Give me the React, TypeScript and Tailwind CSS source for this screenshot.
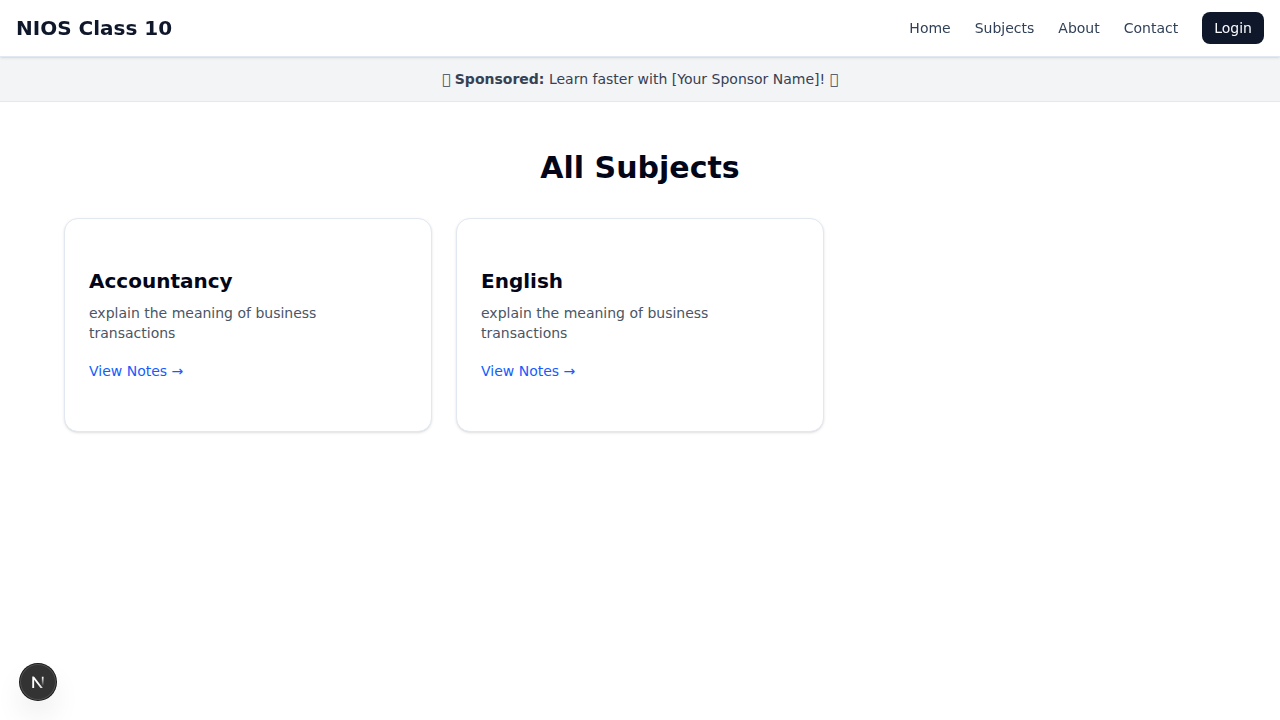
const subjects = [
  { name: "Accountancy", description: "explain the meaning of business transactions" },
  { name: "English", description: "explain the meaning of business transactions" },
];

const links = ["Home", "Subjects", "About", "Contact"];

function DevIndicator() {
  return (
    <div className="fixed bottom-5 left-5 flex size-9 items-center justify-center rounded-full bg-[#333333] shadow-[0_0_0_1px_#171717,inset_0_0_0_1px_rgba(255,255,255,0.14),0_16px_32px_-8px_rgba(0,0,0,0.24)]">
      <svg width="36" height="36" viewBox="0 0 36 36" fill="none" className="shrink-0">
        <defs>
          <linearGradient id="diagonal" x1="18" y1="19" x2="25" y2="27" gradientUnits="userSpaceOnUse">
            <stop stopColor="white" />
            <stop offset="0.6" stopColor="white" stopOpacity="0.8" />
            <stop offset="1" stopColor="white" stopOpacity="0.2" />
          </linearGradient>
          <linearGradient id="stem" x1="22.7" y1="13" x2="22.7" y2="22" gradientUnits="userSpaceOnUse">
            <stop stopColor="white" />
            <stop offset="1" stopColor="white" stopOpacity="0" />
          </linearGradient>
          <clipPath id="letter">
            <rect x="11" y="12.4" width="14" height="11.6" />
          </clipPath>
        </defs>
        <g clipPath="url(#letter)">
          <path d="M24.1 27.2L13.2 13V24.6" stroke="url(#diagonal)" strokeWidth="1.86" />
          <path d="M22.7 12.4V24" stroke="url(#stem)" strokeWidth="1.7" />
        </g>
      </svg>
    </div>
  );
}

export default function App() {
  return (
    <div className="min-h-screen bg-white font-['DejaVu_Sans',sans-serif] text-[#020618]">
      <header className="sticky top-0 z-10 flex h-[57px] items-center justify-between border-b border-slate-200 bg-white px-4 shadow-sm will-change-transform">
        <span className="text-xl font-bold text-slate-900">NIOS Class 10</span>
        <nav className="flex items-center gap-6 text-sm text-slate-700">
          {links.map((link) => (
            <a key={link} href="#">{link}</a>
          ))}
          <a href="#" className="flex h-8 items-center rounded-lg bg-slate-900 px-3 text-slate-50">Login</a>
        </nav>
      </header>
      <div className="flex h-[45px] items-center justify-center border-b border-slate-200 bg-gray-100 text-sm text-gray-700">
        <p>{"\uF8F0"} <strong>Sponsored:</strong> Learn faster with [Your Sponsor Name]! {"\uF8F0"}</p>
      </div>
      <main className="mx-auto max-w-[1200px] px-6 pt-12">
        <h1 className="mb-8 text-center text-3xl font-bold">All Subjects</h1>
        <div className="grid grid-cols-3 gap-6">
          {subjects.map((subject) => (
            <article key={subject.name} className="h-[214px] rounded-[14px] border border-slate-200 bg-white px-6 pt-12 shadow-sm">
              <h2 className="mb-2 text-xl font-semibold">{subject.name}</h2>
              <p className="mb-4 text-sm text-gray-600">{subject.description}</p>
              <a href="#" className="text-sm text-blue-600">View Notes →</a>
            </article>
          ))}
        </div>
      </main>
      <DevIndicator />
    </div>
  );
}
